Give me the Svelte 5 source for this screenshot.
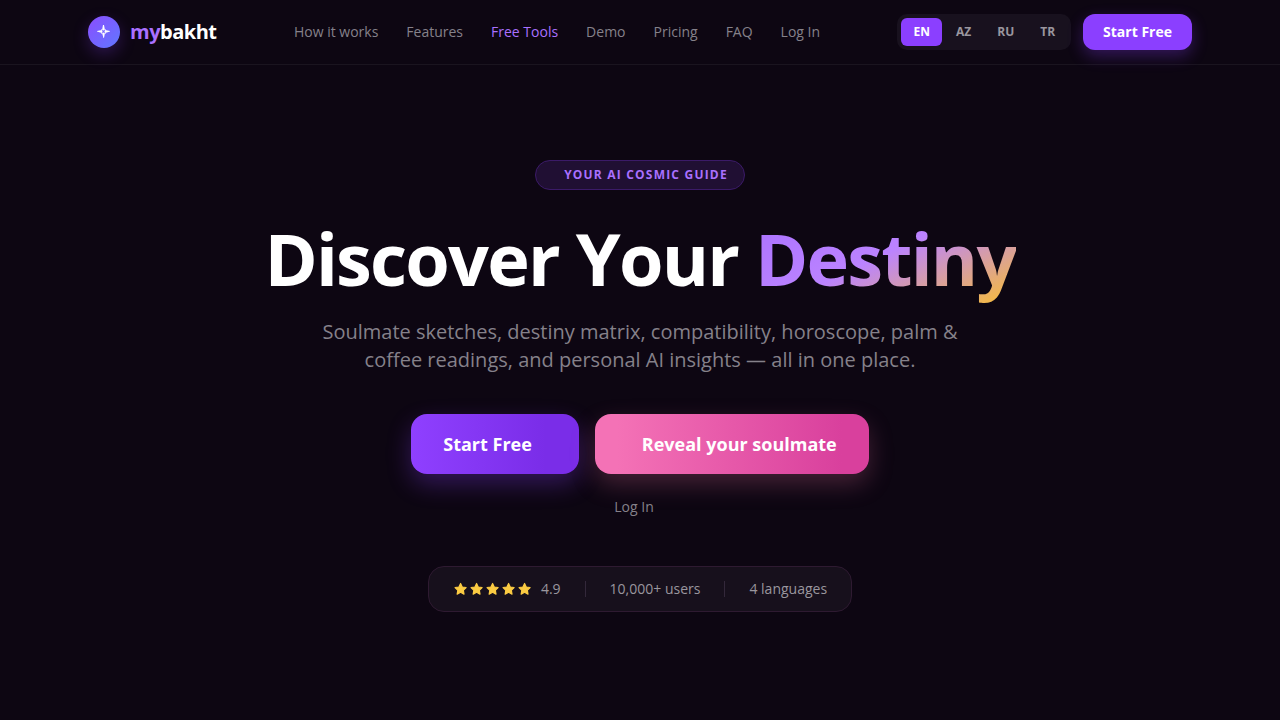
<script lang="ts">
  // ── Content ────────────────────────────────────────────────────────────────
  const links = [
    { label: 'How it works', href: '#how' },
    { label: 'Features', href: '#features' },
    { label: 'Free Tools', href: '#tools', active: true },
    { label: 'Demo', href: '#demo' },
    { label: 'Pricing', href: '#pricing' },
    { label: 'FAQ', href: '#faq' },
    { label: 'Log In', href: '#login' },
  ]
  const langs = ['EN', 'AZ', 'RU', 'TR']
  const stars = [1, 2, 3, 4, 5]

  // ── State ──────────────────────────────────────────────────────────────────
  let lang = $state('EN')
</script>

<header class="header">
  <div class="bar">
    <a class="logo" href="#top">
      <span class="logo-mark">
        <svg viewBox="0 0 16 16" width="16" height="16" aria-hidden="true">
          <path
            fill="#fff"
            d="M7.5 1 L8 1 L8.9 5.8 L7.5 6.6 L6.1 5.8 L7 1 Z M14 7.5 L9.2 8.9 L8.4 7.5 L9.2 6.1 L14 7 Z M7.5 14 L6.1 9.2 L7.5 8.4 L8.9 9.2 L8 14 Z M1 7.5 L1 7 L5.8 6.1 L6.6 7.5 L5.8 8.9 Z"
          />
          <path
            fill="none"
            stroke="#fff"
            stroke-width=".8"
            d="M5.3 5.3 L6.2 6.2 M9.7 5.3 L8.8 6.2 M5.3 9.7 L6.2 8.8 M9.7 9.7 L8.8 8.8"
          />
        </svg>
      </span>
      <span class="logo-text"><span class="accent">my</span>bakht</span>
    </a>

    <nav class="nav">
      {#each links as link}
        <a class:active={link.active} href={link.href}>{link.label}</a>
      {/each}
    </nav>

    <div class="actions">
      <div class="langs">
        {#each langs as code}
          <button class="lang" class:on={lang === code} onclick={() => lang = code}>{code}</button>
        {/each}
      </div>
      <button class="cta">Start Free</button>
    </div>
  </div>
</header>

<main class="hero">
  <div class="badge"><span class="slot"></span>Your AI Cosmic Guide</div>

  <h1>Discover Your <span class="gradient">Destiny</span></h1>

  <p class="lead">
    Soulmate sketches, destiny matrix, compatibility, horoscope, palm &amp; coffee readings,
    and personal AI insights — all in one place.
  </p>

  <div class="buttons">
    <button class="btn violet">Start Free<span class="slot"></span></button>
    <button class="btn pink"><span class="slot"></span>Reveal your soulmate</button>
  </div>

  <a class="login" href="#login">Log In<span class="slot"></span></a>

  <div class="stats">
    <div class="rating">
      <span class="stars">
        {#each stars as s (s)}
          <svg viewBox="0 0 24 24" width="14" height="14" aria-hidden="true">
            <path
              fill="#fbcb43"
              stroke="#fbcb43"
              stroke-width="2"
              stroke-linejoin="round"
              d="M13 2.5 L15.9 8.6 L22.5 9.5 L17.7 14.1 L18.9 20.8 L13 17.6 L7.1 20.8 L8.3 14.1 L3.5 9.5 L10.1 8.6 Z"
            />
          </svg>
        {/each}
      </span>
      <span>4.9</span>
    </div>
    <span class="sep"></span>
    <span>10,000+ users</span>
    <span class="sep"></span>
    <span>4 languages</span>
  </div>
</main>

<style>
  :global(body) {
    background: #0d0612;
    color: #fff;
    font-family: "Open Sans", "Noto Sans", sans-serif;
  }

  a { text-decoration: none; color: inherit; }
  button { font-family: inherit; border: 0; cursor: pointer; color: #fff; }
  .slot { display: inline-block; flex-shrink: 0; }

  /* ── Header ── */
  .header {
    border-bottom: 1px solid #1a141f;
  }
  .bar {
    box-sizing: border-box;
    max-width: 1152px;
    height: 64px;
    margin: 0 auto;
    padding: 0 24px;
    display: flex;
    align-items: center;
    justify-content: space-between;
  }

  .logo {
    display: flex;
    align-items: center;
    gap: 10px;
  }
  .logo-mark {
    width: 32px;
    height: 32px;
    border-radius: 50%;
    display: flex;
    align-items: center;
    justify-content: center;
    background: linear-gradient(135deg, #8b4dff, #6078ff);
    box-shadow: 0 6px 16px rgba(139, 63, 255, .25);
  }
  .logo-text {
    font-size: 20px;
    line-height: 28px;
    font-weight: 700;
    letter-spacing: -.025em;
  }
  .accent { color: #a970ff; }

  .nav {
    display: flex;
    gap: 28px;
    font-size: 14px;
    line-height: 20px;
    color: #85818a;
  }
  .nav .active { color: #a970ff; }

  .actions {
    display: flex;
    align-items: center;
    gap: 12px;
  }
  .langs {
    display: flex;
    gap: 2px;
    padding: 4px;
    border-radius: 10px;
    background: #18111e;
  }
  .lang {
    padding: 6px 12px;
    border-radius: 6px;
    background: transparent;
    color: #9a969e;
    font-size: 12px;
    line-height: 16px;
    font-weight: 700;
  }
  .lang.on {
    background: #8b3fff;
    color: #fff;
  }
  .cta {
    padding: 8px 20px;
    border-radius: 12px;
    background: #8b3fff;
    font-size: 14px;
    line-height: 20px;
    font-weight: 700;
    box-shadow: 0 6px 16px rgba(139, 63, 255, .3);
  }

  /* ── Hero ── */
  .hero {
    display: flex;
    flex-direction: column;
    align-items: center;
    padding: 95px 24px;
    text-align: center;
  }
  .badge {
    display: flex;
    align-items: center;
    padding: 6px 16px;
    border: 1px solid #3b1a68;
    border-radius: 16px;
    background: #200f33;
    color: #a970ff;
    font-size: 12px;
    line-height: 16px;
    font-weight: 700;
    letter-spacing: .1em;
    text-transform: uppercase;
  }
  .badge .slot { width: 12px; }

  h1 {
    margin: 28px 0 20px;
    font-size: 72px;
    font-weight: 700;
    line-height: 80px;
    letter-spacing: -.025em;
  }
  .gradient {
    background: linear-gradient(155deg, #a970ff 0%, #bb83ff 48%, #fbc02d 100%);
    -webkit-background-clip: text;
    background-clip: text;
    color: transparent;
  }

  .lead {
    max-width: 672px;
    margin: 0;
    font-size: 20px;
    line-height: 28px;
    color: #85818a;
  }

  .buttons {
    display: flex;
    flex-wrap: wrap;
    justify-content: center;
    gap: 16px;
    margin-top: 40px;
  }
  .btn {
    display: flex;
    align-items: center;
    gap: 8px;
    padding: 16px 32px;
    border-radius: 16px;
    font-size: 18px;
    line-height: 28px;
    font-weight: 700;
  }
  .btn .slot { width: 7px; }
  .violet {
    background: linear-gradient(90deg, #8f40ff, #7a2de8 80%);
    box-shadow: 0 10px 24px rgba(139, 63, 255, .3);
  }
  .pink {
    background: linear-gradient(90deg, #f472b6 8%, #d9409d 90%);
    box-shadow: 0 10px 24px rgba(236, 110, 160, .25);
  }

  .login {
    margin-top: 23px;
    font-size: 14px;
    line-height: 20px;
    color: #85818a;
  }
  .login .slot { width: 12px; }

  .stats {
    display: flex;
    align-items: center;
    gap: 24px;
    margin-top: 49px;
    padding: 12px 24px;
    border: 1px solid #2e1a31;
    border-radius: 16px;
    background: #17101c;
    color: #9a969e;
    font-size: 14px;
    line-height: 20px;
  }
  .rating {
    display: flex;
    align-items: center;
    gap: 10px;
  }
  .stars { display: flex; gap: 2px; }
  .sep {
    width: 1px;
    height: 16px;
    background: #33283a;
  }
</style>
